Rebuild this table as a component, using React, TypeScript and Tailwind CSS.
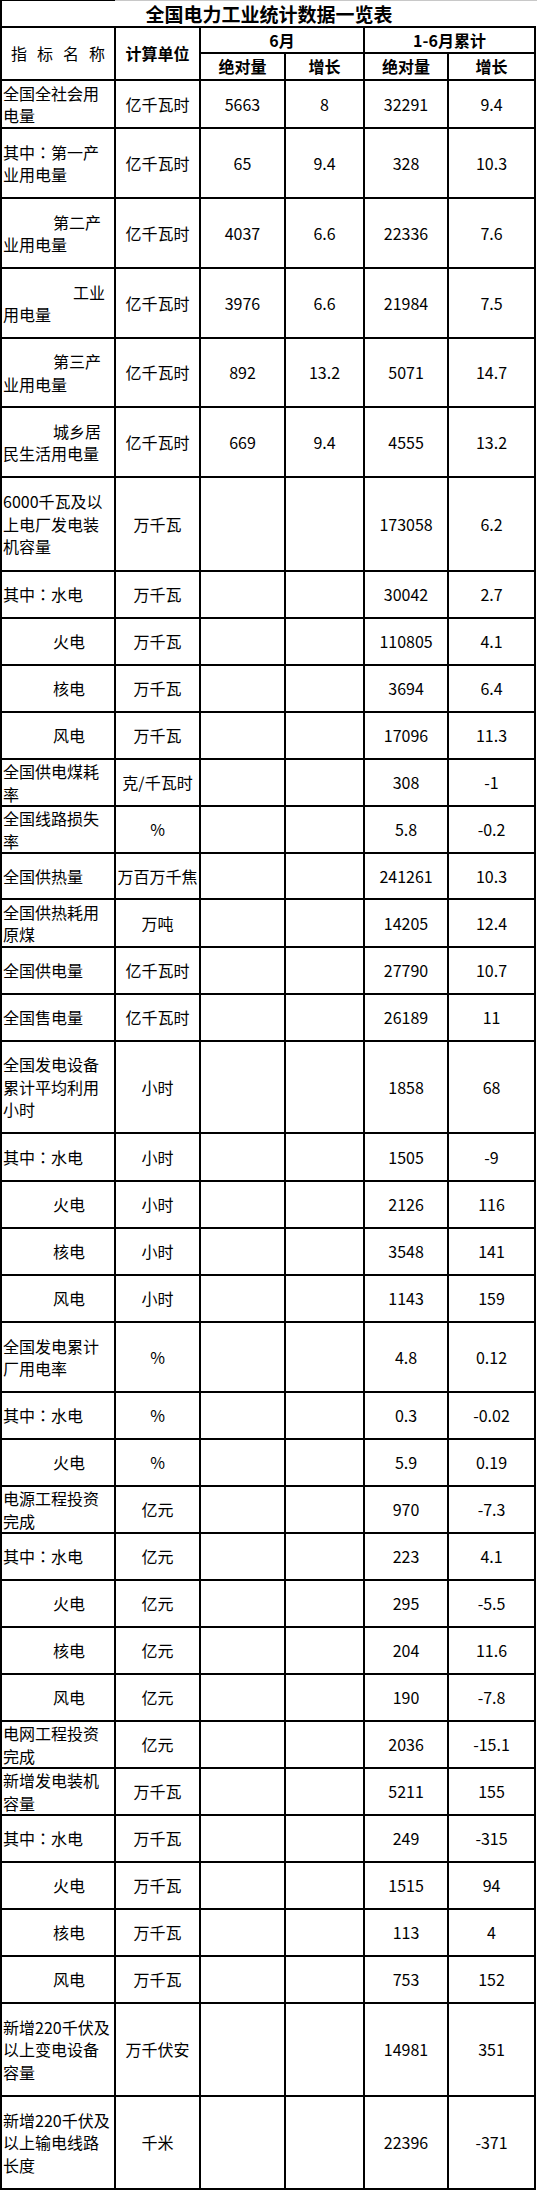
import React from "react";

type Row = {
  label: string[];
  ind?: string;
  unit: string;
  v: [string, string, string, string];
  h: string;
};

const I50 = "pl-[50px]";
const I70 = "pl-[70px]";

const rows: Row[] = [
  { label: ["全国全社会用", "电量"], unit: "亿千瓦时", v: ["5663", "8", "32291", "9.4"], h: "h-[48px]" },
  { label: ["其中：第一产", "业用电量"], unit: "亿千瓦时", v: ["65", "9.4", "328", "10.3"], h: "h-[70px]" },
  { label: ["第二产", "业用电量"], ind: I50, unit: "亿千瓦时", v: ["4037", "6.6", "22336", "7.6"], h: "h-[70px]" },
  { label: ["工业", "用电量"], ind: I70, unit: "亿千瓦时", v: ["3976", "6.6", "21984", "7.5"], h: "h-[70px]" },
  { label: ["第三产", "业用电量"], ind: I50, unit: "亿千瓦时", v: ["892", "13.2", "5071", "14.7"], h: "h-[69px]" },
  { label: ["城乡居", "民生活用电量"], ind: I50, unit: "亿千瓦时", v: ["669", "9.4", "4555", "13.2"], h: "h-[70px]" },
  { label: ["6000千瓦及以", "上电厂发电装", "机容量"], unit: "万千瓦", v: ["", "", "173058", "6.2"], h: "h-[94px]" },
  { label: ["其中：水电"], unit: "万千瓦", v: ["", "", "30042", "2.7"], h: "h-[47px]" },
  { label: ["火电"], ind: I50, unit: "万千瓦", v: ["", "", "110805", "4.1"], h: "h-[47px]" },
  { label: ["核电"], ind: I50, unit: "万千瓦", v: ["", "", "3694", "6.4"], h: "h-[47px]" },
  { label: ["风电"], ind: I50, unit: "万千瓦", v: ["", "", "17096", "11.3"], h: "h-[47px]" },
  { label: ["全国供电煤耗", "率"], unit: "克/千瓦时", v: ["", "", "308", "-1"], h: "h-[47px]" },
  { label: ["全国线路损失", "率"], unit: "%", v: ["", "", "5.8", "-0.2"], h: "h-[47px]" },
  { label: ["全国供热量"], unit: "万百万千焦", v: ["", "", "241261", "10.3"], h: "h-[46px]" },
  { label: ["全国供热耗用", "原煤"], unit: "万吨", v: ["", "", "14205", "12.4"], h: "h-[48px]" },
  { label: ["全国供电量"], unit: "亿千瓦时", v: ["", "", "27790", "10.7"], h: "h-[47px]" },
  { label: ["全国售电量"], unit: "亿千瓦时", v: ["", "", "26189", "11"], h: "h-[47px]" },
  { label: ["全国发电设备", "累计平均利用", "小时"], unit: "小时", v: ["", "", "1858", "68"], h: "h-[92px]" },
  { label: ["其中：水电"], unit: "小时", v: ["", "", "1505", "-9"], h: "h-[48px]" },
  { label: ["火电"], ind: I50, unit: "小时", v: ["", "", "2126", "116"], h: "h-[47px]" },
  { label: ["核电"], ind: I50, unit: "小时", v: ["", "", "3548", "141"], h: "h-[47px]" },
  { label: ["风电"], ind: I50, unit: "小时", v: ["", "", "1143", "159"], h: "h-[47px]" },
  { label: ["全国发电累计", "厂用电率"], unit: "%", v: ["", "", "4.8", "0.12"], h: "h-[70px]" },
  { label: ["其中：水电"], unit: "%", v: ["", "", "0.3", "-0.02"], h: "h-[47px]" },
  { label: ["火电"], ind: I50, unit: "%", v: ["", "", "5.9", "0.19"], h: "h-[47px]" },
  { label: ["电源工程投资", "完成"], unit: "亿元", v: ["", "", "970", "-7.3"], h: "h-[47px]" },
  { label: ["其中：水电"], unit: "亿元", v: ["", "", "223", "4.1"], h: "h-[47px]" },
  { label: ["火电"], ind: I50, unit: "亿元", v: ["", "", "295", "-5.5"], h: "h-[47px]" },
  { label: ["核电"], ind: I50, unit: "亿元", v: ["", "", "204", "11.6"], h: "h-[47px]" },
  { label: ["风电"], ind: I50, unit: "亿元", v: ["", "", "190", "-7.8"], h: "h-[47px]" },
  { label: ["电网工程投资", "完成"], unit: "亿元", v: ["", "", "2036", "-15.1"], h: "h-[47px]" },
  { label: ["新增发电装机", "容量"], unit: "万千瓦", v: ["", "", "5211", "155"], h: "h-[47px]" },
  { label: ["其中：水电"], unit: "万千瓦", v: ["", "", "249", "-315"], h: "h-[47px]" },
  { label: ["火电"], ind: I50, unit: "万千瓦", v: ["", "", "1515", "94"], h: "h-[47px]" },
  { label: ["核电"], ind: I50, unit: "万千瓦", v: ["", "", "113", "4"], h: "h-[47px]" },
  { label: ["风电"], ind: I50, unit: "万千瓦", v: ["", "", "753", "152"], h: "h-[47px]" },
  { label: ["新增220千伏及", "以上变电设备", "容量"], unit: "万千伏安", v: ["", "", "14981", "351"], h: "h-[93px]" },
  { label: ["新增220千伏及", "以上输电线路", "长度"], unit: "千米", v: ["", "", "22396", "-371"], h: "h-[93px]" },
];

const cell = "border-r-2 border-b-2 border-black text-center align-middle p-0 whitespace-nowrap";

function Label({ text }: { text: string }) {
  const idx = text.indexOf("：");
  if (idx < 0) return <>{text}</>;
  return (
    <>
      {text.slice(0, idx)}
      <span className="font-['Noto_Sans_CJK_TC',sans-serif]">：</span>
      {text.slice(idx + 1)}
    </>
  );
}

export default function App() {
  return (
    <div className="w-[537px] bg-white text-black font-['Noto_Sans_CJK_SC','Liberation_Sans',sans-serif] text-[16px] leading-[22.5px]">
      <div className="flex h-px">
        <div className="w-[115px] bg-black" />
        <div className="flex-1 bg-[#c8c8c8]" />
      </div>
      <div className="h-[25px] w-[536px] border-l-2 border-black flex items-center justify-center font-bold text-[19px] leading-[25px]">
        全国电力工业统计数据一览表
      </div>
      <table className="table-fixed border-separate border-spacing-0 w-[536px]">
        <colgroup>
          <col className="w-[116px]" />
          <col className="w-[85px]" />
          <col className="w-[85px]" />
          <col className="w-[79px]" />
          <col className="w-[84px]" />
          <col className="w-[87px]" />
        </colgroup>
        <thead>
          <tr className="h-[28px]">
            <td rowSpan={2} className={cell + " border-l-2 border-t-2"}>
              <div className="flex justify-center gap-[10px]">
                <span>指</span>
                <span>标</span>
                <span>名</span>
                <span>称</span>
              </div>
            </td>
            <td rowSpan={2} className={cell + " border-t-2 font-bold"}>
              计算单位
            </td>
            <td colSpan={2} className={cell + " border-t-2 font-bold"}>
              6月
            </td>
            <td colSpan={2} className={cell + " border-t-2 font-bold"}>
              1-6月累计
            </td>
          </tr>
          <tr className="h-[27px]">
            <td className={cell + " font-bold"}>绝对量</td>
            <td className={cell + " font-bold"}>增长</td>
            <td className={cell + " font-bold"}>绝对量</td>
            <td className={cell + " font-bold"}>增长</td>
          </tr>
        </thead>
        <tbody>
          {rows.map((r, i) => (
            <tr key={i} className={r.h}>
              <td className="border-l-2 border-r-2 border-b-2 border-black text-left align-middle py-0 pl-px pr-0 whitespace-nowrap">
                {r.label.map((t, j) => (
                  <div key={j} className={j === 0 && r.ind ? r.ind : ""}>
                    <Label text={t} />
                  </div>
                ))}
              </td>
              <td className={cell}>{r.unit}</td>
              <td className={cell}>{r.v[0]}</td>
              <td className={cell}>{r.v[1]}</td>
              <td className={cell}>{r.v[2]}</td>
              <td className={cell}>{r.v[3]}</td>
            </tr>
          ))}
        </tbody>
      </table>
    </div>
  );
}
